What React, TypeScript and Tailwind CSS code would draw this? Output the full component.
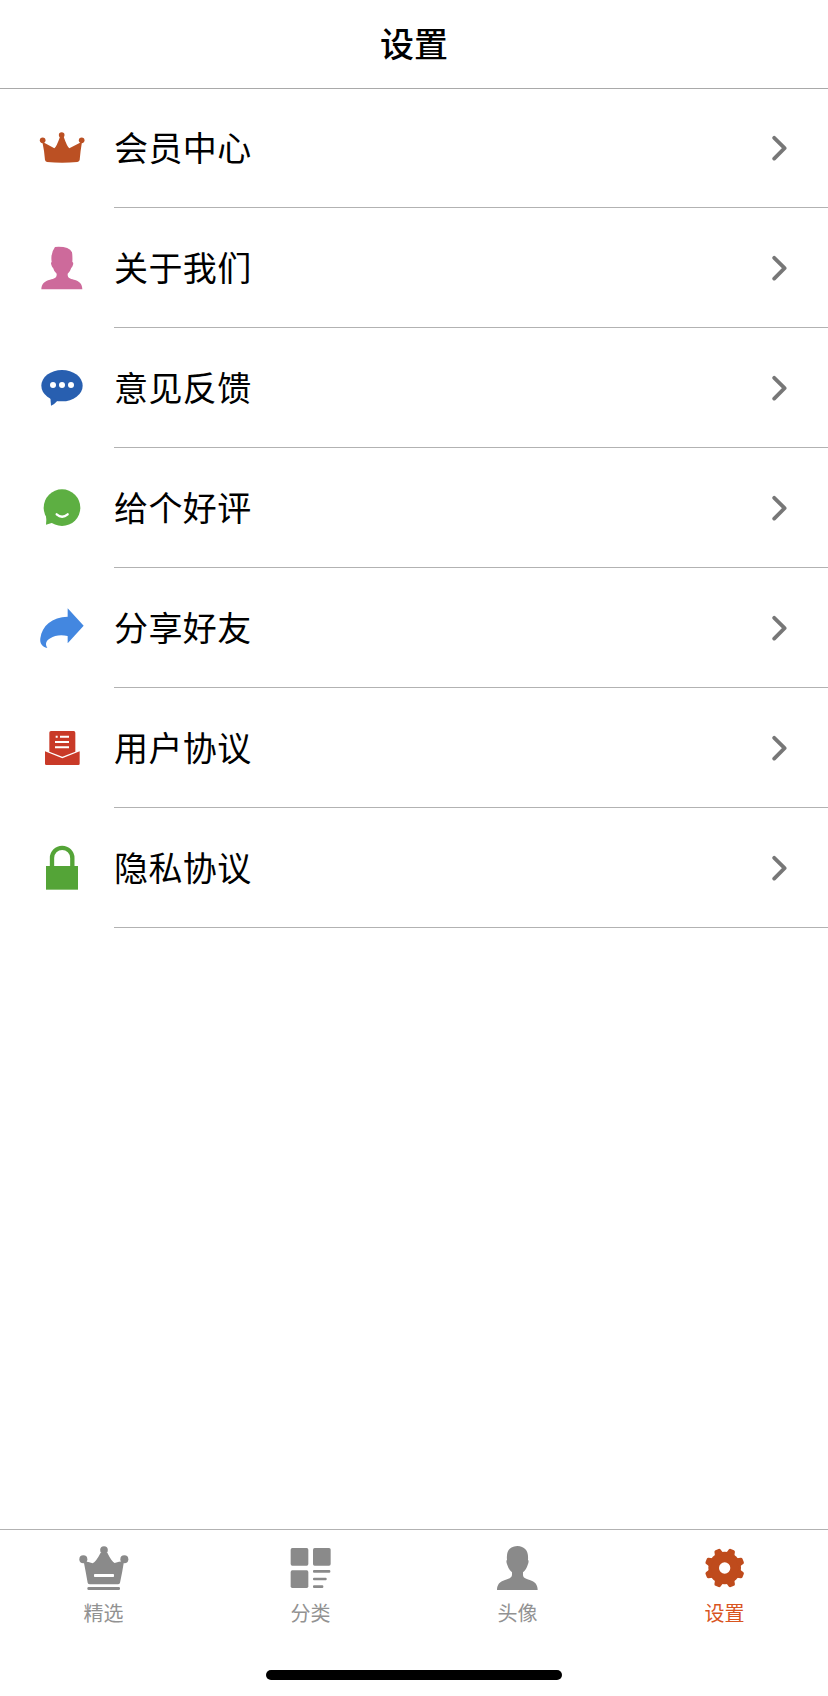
import React from 'react';

interface MenuItem {
  id: string;
  label: string;
  icon: React.ReactNode;
}

interface TabItem extends MenuItem {
  active?: boolean;
}

const MenuSvg: React.FC<{ className: string; children: React.ReactNode }> = ({ className, children }) => (
  <svg viewBox="0 0 144 144" className={`h-12 w-12 ${className}`} fill="currentColor" aria-hidden="true">
    {children}
  </svg>
);

const TabSvg: React.FC<{ children: React.ReactNode }> = ({ children }) => (
  <svg viewBox="0 0 150 150" className="h-[50px] w-[50px]" fill="currentColor" aria-hidden="true">
    {children}
  </svg>
);

const menuItems: MenuItem[] = [
  {
    id: 'member',
    label: '会员中心',
    icon: (
      <MenuSvg className="text-[#bb5023]">
        <circle cx="14" cy="49" r="8.5" />
        <circle cx="71" cy="33" r="8.5" />
        <circle cx="131" cy="49" r="8.5" />
        <path d="M13 53 L49 73 Q56 67 66 38 H77 Q87 67 94 73 L132 53 Q127 82 125 108 Q124 113 118 114 Q72 119 27 114 Q22 113 21 108 Q19 80 13 53Z" />
      </MenuSvg>
    ),
  },
  {
    id: 'about',
    label: '关于我们',
    icon: (
      <MenuSvg className="text-[#cd6a9b]">
        <path d="M51 9 Q92 6 102 25 Q104 38 103 54 Q108 56 104 65 Q102 71 100 71 Q97 82 89 89 V92 C89 101 96 104 108 107 C124 111 133 120 133 136 H10 C10 120 20 111 36 107 C48 104 56 101 56 92 V89 Q48 82 45 71 Q43 71 41 65 Q37 56 41 54 Q37 28 51 9Z" />
      </MenuSvg>
    ),
  },
  {
    id: 'feedback',
    label: '意见反馈',
    icon: (
      <MenuSvg className="text-[#285fb0]">
        <ellipse cx="72" cy="65" rx="62" ry="47" />
        <path d="M37 98 L39 125 Q50 121 60 109 Z" />
        <g className="fill-white">
          <circle cx="45" cy="63" r="9" />
          <circle cx="72" cy="63" r="9" />
          <circle cx="99" cy="63" r="9" />
        </g>
      </MenuSvg>
    ),
  },
  {
    id: 'rate',
    label: '给个好评',
    icon: (
      <MenuSvg className="text-[#5daf42]">
        <circle cx="72" cy="71" r="55" />
        <path d="M24 95 Q26 108 24 122 L48 115Z" />
        <path d="M56 91 Q72 105 89 91" fill="none" stroke="white" strokeWidth="7" strokeLinecap="round" />
      </MenuSvg>
    ),
  },
  {
    id: 'share',
    label: '分享好友',
    icon: (
      <MenuSvg className="text-[#4387e0]">
        <path d="M89 13 L137 65 L89 118 V96 C68 92 50 94 37 103 C23 111 21 121 28 132 C12 129 5 118 7 103 C12 64 42 40 89 38Z" />
      </MenuSvg>
    ),
  },
  {
    id: 'terms',
    label: '用户协议',
    icon: (
      <MenuSvg className="text-[#c93a28]">
        <path d="M39 21 H107 Q112 21 112 26 V83 L73 98 L34 83 V26 Q34 21 39 21Z" />
        <path d="M21 82 L73 103 L125 82 V119 Q125 123 121 123 H25 Q21 123 21 119Z" />
        <path d="M53 38 H59 M66 38 H93 M51 54 H93 M51 70 H93" fill="none" stroke="white" strokeWidth="6" />
      </MenuSvg>
    ),
  },
  {
    id: 'privacy',
    label: '隐私协议',
    icon: (
      <MenuSvg className="text-[#54a437]">
        <rect x="24" y="66" width="96" height="71" />
        <path d="M42 68 V42 A30.5 30.5 0 0 1 103 42 V68" fill="none" stroke="currentColor" strokeWidth="13" />
      </MenuSvg>
    ),
  },
];

const gearTeeth = [22.5, 67.5, 112.5, 157.5, 202.5, 247.5, 292.5, 337.5];

const tabItems: TabItem[] = [
  {
    id: 'featured',
    label: '精选',
    icon: (
      <TabSvg>
        <circle cx="13" cy="49" r="12" />
        <circle cx="75" cy="21" r="11.5" />
        <circle cx="136" cy="49" r="12" />
        <path d="M14 55 Q29 56 41 61 Q51 56 65 29 H85 Q97 54 107 60 Q119 56 135 55 Q130 88 123 119 Q122 124 116 124 H33 Q27 124 26 119 Q20 86 14 55Z" />
        <rect x="45" y="93" width="60" height="9" rx="2" className="fill-white" />
        <rect x="25" y="132" width="98" height="9" rx="4" />
      </TabSvg>
    ),
  },
  {
    id: 'category',
    label: '分类',
    icon: (
      <TabSvg>
        <rect x="14" y="15" width="53" height="53" rx="5" />
        <rect x="81" y="15" width="53" height="53" rx="5" />
        <rect x="14" y="82" width="53" height="53" rx="5" />
        <rect x="81" y="81" width="52" height="8" rx="3" />
        <rect x="81" y="104" width="41" height="8" rx="3" />
        <rect x="81" y="127" width="31" height="8" rx="3" />
      </TabSvg>
    ),
  },
  {
    id: 'avatar',
    label: '头像',
    icon: (
      <TabSvg>
        <path d="M73 9 Q108 11 105 50 Q109 54 104 66 Q99 82 90 88 V95 C90 104 98 107 110 111 C126 116 134 125 134 141 H12 C12 125 20 116 36 111 C48 107 57 104 57 95 V88 Q48 82 43 66 Q38 54 42 50 Q38 11 73 9Z" />
      </TabSvg>
    ),
  },
  {
    id: 'settings',
    label: '设置',
    active: true,
    icon: (
      <TabSvg>
        <g transform="translate(74 75)">
          <circle r="49" />
          {gearTeeth.map(angle => (
            <path key={angle} d="M-14 -40 L-10 -56 Q-9 -60 -5 -60 H5 Q9 -60 10 -56 L14 -40Z" transform={`rotate(${angle})`} />
          ))}
          <circle r="17" className="fill-white" />
        </g>
      </TabSvg>
    ),
  },
];

const ChevronIcon: React.FC = () => (
  <svg viewBox="0 0 16 28" className="h-7 w-4" fill="none" stroke="currentColor" strokeWidth="3.8" strokeLinecap="round" strokeLinejoin="round" aria-hidden="true">
    <path d="M3.2 3.8 L13.6 14.2 L3.2 24.6" />
  </svg>
);

const MenuRow: React.FC<{ item: MenuItem }> = ({ item }) => (
  <li className="flex h-[120px] items-stretch">
    <div className="flex w-[114px] items-center pl-[38px]">{item.icon}</div>
    <div className="flex flex-1 items-center justify-between border-b border-[#b2b2b2] pr-[41px]">
      <span className="pt-0.5 text-[34px] leading-[48px] tracking-[0.4px] text-black">{item.label}</span>
      <span className="text-[#777777]"><ChevronIcon /></span>
    </div>
  </li>
);

export default function App() {
  return (
    <div className="flex h-[1696px] w-full flex-col bg-white font-['Liberation_Sans','Noto_Sans_CJK_SC',sans-serif]">
      <header className="flex h-[89px] shrink-0 items-center justify-center border-b border-[#a9a9a9]">
        <h1 className="pt-0.5 text-[34px] leading-[48px] font-medium text-black">设置</h1>
      </header>

      <main className="-mt-px flex-1">
        <ul>
          {menuItems.map(item => <MenuRow key={item.id} item={item} />)}
        </ul>
      </main>

      <nav className="flex h-[167px] shrink-0 flex-col items-center border-t border-[#b2b2b2]">
        <div className="grid w-full grid-cols-4 pt-[13px]">
          {tabItems.map(tab => (
            <button
              key={tab.id}
              type="button"
              className={`flex flex-col items-center ${tab.active ? 'text-[#bf4b1c]' : 'text-[#8a8a8a]'}`}
            >
              {tab.icon}
              <span className={`mt-[7px] text-[20px] leading-7 ${tab.active ? 'text-[#d9551f]' : 'text-[#929292]'}`}>{tab.label}</span>
            </button>
          ))}
        </div>
        {/* Home indicator */}
        <div className="mt-auto mb-4 h-2.5 w-[296px] rounded-full bg-black" />
      </nav>
    </div>
  );
}
